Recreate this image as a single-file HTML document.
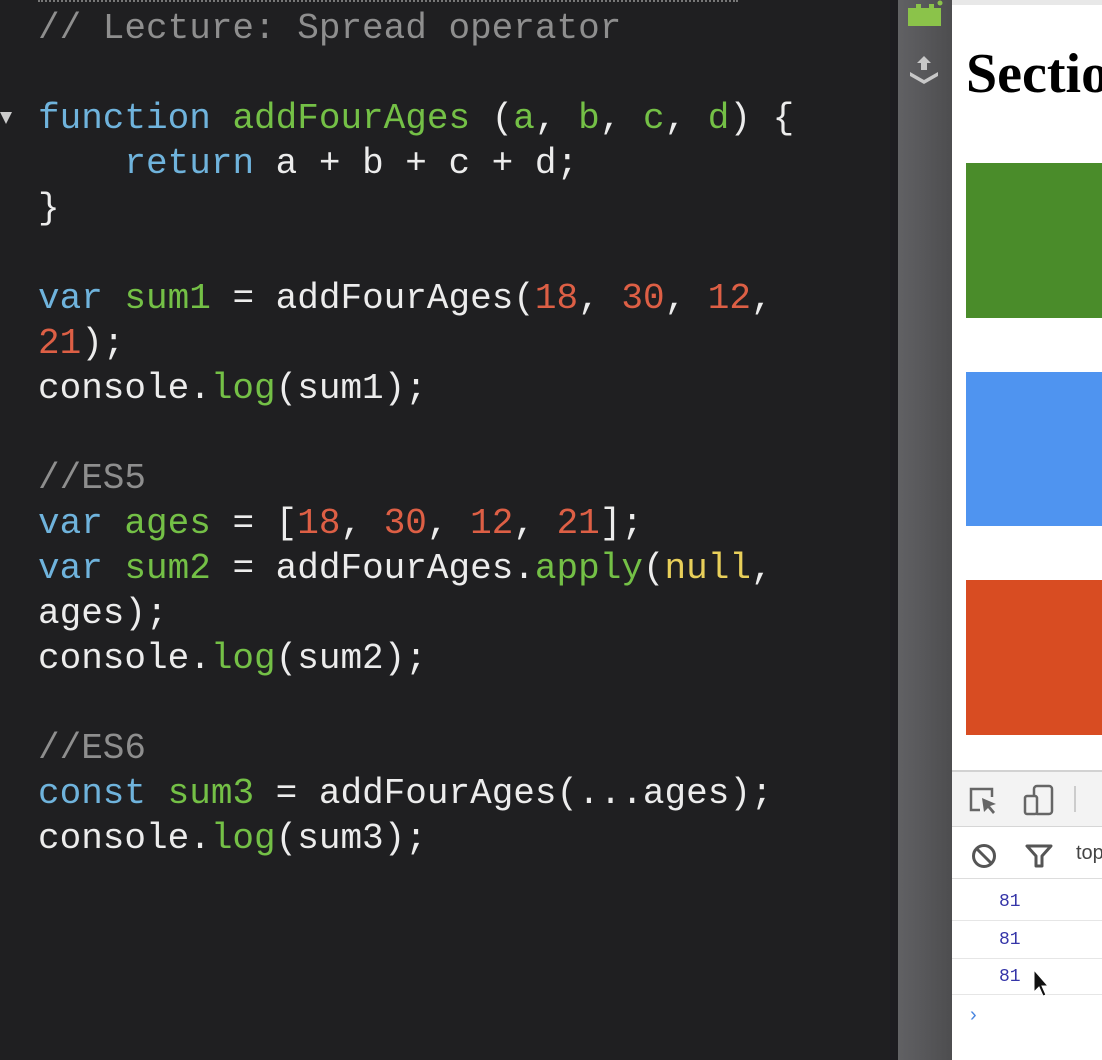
<!DOCTYPE html>
<html><head><meta charset="utf-8"><style>
html,body{margin:0;padding:0;width:1102px;height:1060px;overflow:hidden;background:#1f1f21;position:relative}
.code{position:absolute;left:38px;top:6px;font-family:"Liberation Mono",monospace;font-size:36px;line-height:45px;color:#ececec;white-space:pre;font-weight:normal;letter-spacing:0px}
.c{color:#8e8e8e}.k{color:#6fb3dc}.g{color:#74c046}.n{color:#dd5f45}.y{color:#e8cf5a}
.strip1{position:absolute;left:890px;top:0;width:8px;height:1060px;background:#1d1c21}
.strip2{position:absolute;left:898px;top:0;width:54px;height:1060px;background:linear-gradient(90deg,#616164,#4d4d4f)}
.page{position:absolute;left:952px;top:0;width:150px;height:1060px;background:#fff}
.box{position:absolute;left:14px;width:136px}
.dt{position:absolute;left:952px;top:770px;width:150px;height:290px;background:#fff;border-top:2px solid #d2d2d2}
.log{position:absolute;left:47px;font-family:"Liberation Mono",monospace;font-size:18px;color:#3535a8}
.sep{position:absolute;left:0;width:150px;height:1px;background:#e6e6e6}
</style></head><body>
<div style="position:absolute;left:38px;top:0;width:700px;height:3px;border-top:2px dotted #777"></div>
<div class="code"><span class="c">// Lecture: Spread operator</span>

<span class="k">function</span> <span class="g">addFourAges</span> (<span class="g">a</span>, <span class="g">b</span>, <span class="g">c</span>, <span class="g">d</span>) {
    <span class="k">return</span> a + b + c + d;
}

<span class="k">var</span> <span class="g">sum1</span> = addFourAges(<span class="n">18</span>, <span class="n">30</span>, <span class="n">12</span>,
<span class="n">21</span>);
console.<span class="g">log</span>(sum1);

<span class="c">//ES5</span>
<span class="k">var</span> <span class="g">ages</span> = [<span class="n">18</span>, <span class="n">30</span>, <span class="n">12</span>, <span class="n">21</span>];
<span class="k">var</span> <span class="g">sum2</span> = addFourAges.<span class="g">apply</span>(<span class="y">null</span>,
ages);
console.<span class="g">log</span>(sum2);

<span class="c">//ES6</span>
<span class="k">const</span> <span class="g">sum3</span> = addFourAges(...ages);
console.<span class="g">log</span>(sum3);</div>
<div style="position:absolute;left:0;top:112px;width:0;height:0;border-left:6px solid transparent;border-right:6px solid transparent;border-top:12px solid #ccc"></div>
<div class="strip1"></div>
<div class="strip2">
  <svg style="position:absolute;left:9px;top:0" width="36" height="28" viewBox="0 0 36 28"><path d="M1 8 H9 V4 H14 V8 H22 V4 H27 V8 H34 V26 H1 Z" fill="#8bc34a"/><circle cx="33" cy="3" r="2.5" fill="#8bc34a"/></svg>
  <svg style="position:absolute;left:8px;top:54px" width="36" height="32" viewBox="0 0 36 32"><path d="M18 2 L11 9 H15 V16 H21 V9 H25 Z" fill="#c8c8c8"/><path d="M4 18 L18 26 L32 18 L32 22 L18 30 L4 22 Z" fill="#c8c8c8"/></svg>
</div>
<div class="page">
  <div style="position:absolute;left:0;top:0;width:150px;height:5px;background:#e8e8e8"></div>
  <div style="position:absolute;left:14px;top:42px;font-family:'Liberation Serif',serif;font-weight:bold;font-size:56px;color:#000;white-space:nowrap">Section</div>
  <div class="box" style="top:163px;height:155px;background:#4a8c2a"></div>
  <div class="box" style="top:372px;height:154px;background:#4f94f0"></div>
  <div class="box" style="top:580px;height:155px;background:#d84c22"></div>
</div>
<div class="dt">
  <div style="position:absolute;left:0;top:0;width:150px;height:54px;background:#f3f3f3;border-bottom:1px solid #d6d6d6"></div>
  <svg style="position:absolute;left:16px;top:14px" width="34" height="30" viewBox="0 0 34 30"><path d="M12 24 H3 V3 H24 V11" fill="none" stroke="#666" stroke-width="2.5"/><path d="M14 12 L28 18 L22 20 L27 26 L25 28 L20 22 L16 26 Z" fill="#666"/></svg>
  <svg style="position:absolute;left:70px;top:12px" width="34" height="34" viewBox="0 0 34 34"><rect x="12" y="2" width="18" height="28" rx="3" fill="none" stroke="#666" stroke-width="2.5"/><rect x="3" y="12" width="12" height="18" rx="2" fill="#f3f3f3" stroke="#666" stroke-width="2.5"/></svg>
  <div style="position:absolute;left:122px;top:14px;width:2px;height:26px;background:#ccc"></div>
  <svg style="position:absolute;left:18px;top:70px" width="28" height="28" viewBox="0 0 28 28"><circle cx="14" cy="14" r="10.5" fill="none" stroke="#555" stroke-width="3"/><path d="M7 7 L21 21" stroke="#555" stroke-width="3"/></svg>
  <svg style="position:absolute;left:72px;top:70px" width="30" height="28" viewBox="0 0 30 28"><path d="M3 4 H27 L18 14 V24 H12 V14 Z" fill="none" stroke="#555" stroke-width="3" stroke-linejoin="round"/></svg>
  <div style="position:absolute;left:124px;top:70px;font-family:'Liberation Sans',sans-serif;font-size:20px;color:#444">top</div>
  <div class="sep" style="top:106px;background:#ddd"></div>
  <div class="log" style="top:120px">81</div>
  <div class="sep" style="top:148px"></div>
  <div class="log" style="top:158px">81</div>
  <div class="sep" style="top:186px"></div>
  <div class="log" style="top:195px">81</div>
  <div class="sep" style="top:222px"></div>
  <svg style="position:absolute;left:80px;top:196px" width="18" height="30" viewBox="0 0 18 30"><path d="M2 2 L2 24 L7 19 L11 28 L14 27 L10 18 L16 18 Z" fill="#111" stroke="#fff" stroke-width="1"/></svg>
  <div style="position:absolute;left:18px;top:232px;font-family:'Liberation Sans',sans-serif;font-size:20px;color:#4a86e0">›</div>
</div>
</body></html>
